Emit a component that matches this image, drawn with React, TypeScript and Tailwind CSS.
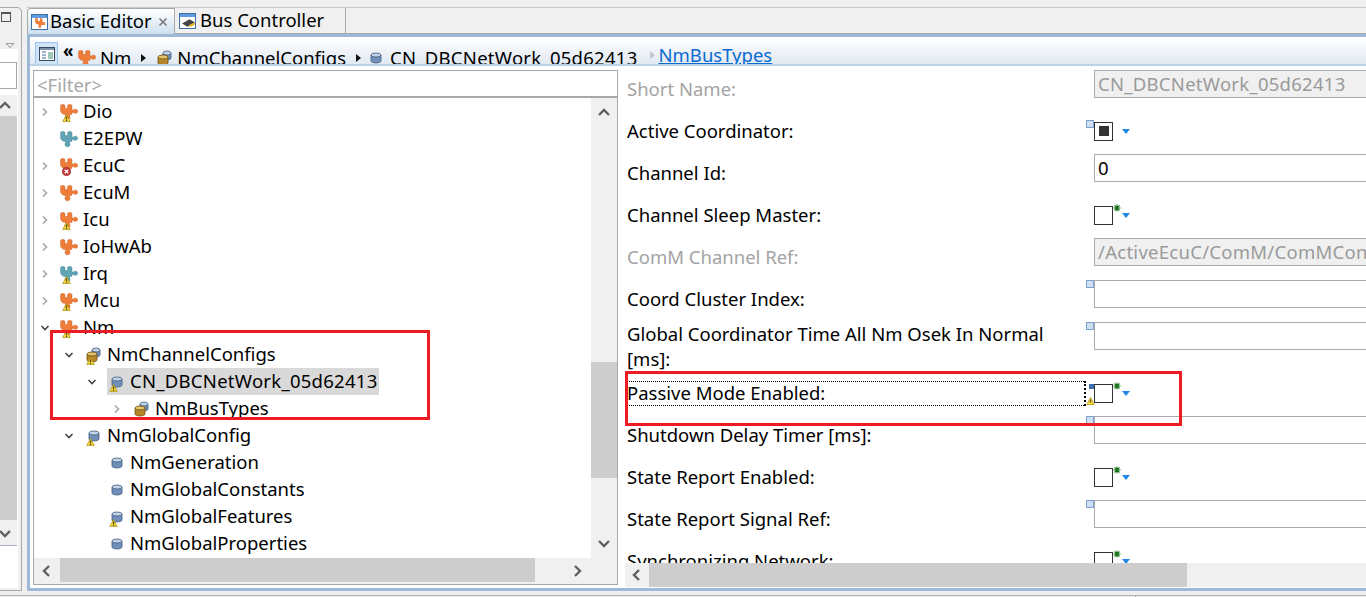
import React from "react";

type Badge = "warn" | "err" | undefined;
type Kind = "puzzle" | "puzzleBlue" | "gold" | "db";

function WarnBadge() {
  return (
    <svg viewBox="0 0 8 8" className="absolute left-[2px] bottom-[-1px] w-[9px] h-[8px]">
      <path d="M4 0.4 L7.8 7.6 H0.2 Z" fill="#f7dc3a" stroke="#a88a10" strokeWidth="0.7" />
      <rect x="3.4" y="2.5" width="1.3" height="3" fill="#5a4a10" />
      <rect x="3.4" y="6" width="1.3" height="1" fill="#5a4a10" />
    </svg>
  );
}

function ErrBadge() {
  return (
    <svg viewBox="0 0 8 8" className="absolute left-[2px] bottom-[-1px] w-[9px] h-[9px]">
      <circle cx="4" cy="4" r="3.6" fill="#c8383c" stroke="#8c2226" strokeWidth="0.6" />
      <path d="M2.4 2.4 L5.6 5.6 M5.6 2.4 L2.4 5.6" stroke="#fff" strokeWidth="1.1" />
    </svg>
  );
}

function Puzzle({ color, dark }: { color: string; dark: string }) {
  return (
    <svg viewBox="0 0 18 18" className="absolute inset-0 w-[18px] h-[18px]">
      <path
        d="M0.5 2.5 C0.5 1 5 1 5 2.5 V5.5 H7.5 V2.5 C7.5 1 12 1 12 2.5 V7 H13.5 C14 5.6 17.8 5.8 17.8 8.2 C17.8 10.6 14 10.8 13.5 9.4 H12 V11.5 H9.5 V13 C10.5 13.5 10.5 16.8 7.5 16.8 C4.6 16.8 4.6 13.5 5.5 13 V11.5 C2.5 11.5 0.5 9.8 0.5 7.5 Z"
        fill={color}
        stroke={dark}
        strokeWidth="0.4"
      />
    </svg>
  );
}

function Cyl({ x, y, w, h, body, top, edge }: { x: number; y: number; w: number; h: number; body: string; top: string; edge: string }) {
  return (
    <g>
      <path d={`M${x} ${y + 2} V${y + h - 2} C${x} ${y + h + 0.6} ${x + w} ${y + h + 0.6} ${x + w} ${y + h - 2} V${y + 2} Z`} fill={body} stroke={edge} strokeWidth="0.8" />
      <ellipse cx={x + w / 2} cy={y + 2} rx={w / 2} ry="2" fill={top} stroke={edge} strokeWidth="0.8" />
    </g>
  );
}

function NodeIcon({ kind, badge }: { kind: Kind; badge?: Badge }) {
  return (
    <span className="relative block w-[18px] h-[18px] shrink-0">
      {kind === "puzzle" && <Puzzle color="#ee7d3a" dark="#c85a20" />}
      {kind === "puzzleBlue" && <Puzzle color="#5fa3b5" dark="#3f8090" />}
      {kind === "db" && (
        <svg viewBox="0 0 18 18" className="absolute inset-0 w-[18px] h-[18px]">
          <Cyl x={5} y={4} w={10} h={10} body="#6f8fb8" top="#c3d3e6" edge="#3f5a80" />
        </svg>
      )}
      {kind === "gold" && (
        <svg viewBox="0 0 18 18" className="absolute inset-0 w-[18px] h-[18px]">
          <Cyl x={8} y={2} w={8} h={9} body="#6f8fb8" top="#c3d3e6" edge="#3f5a80" />
          <Cyl x={3} y={6} w={10} h={10} body="#b8862a" top="#e6c46a" edge="#6e4e10" />
        </svg>
      )}
      {badge === "warn" && <WarnBadge />}
      {badge === "err" && <ErrBadge />}
    </span>
  );
}

function TreeArrow({ open }: { open?: boolean }) {
  if (open) {
    return (
      <svg viewBox="0 0 10 10" className="w-[10px] h-[10px]">
        <path d="M1.5 3 L5 6.5 L8.5 3" fill="none" stroke="#444444" strokeWidth="1.6" />
      </svg>
    );
  }
  return (
    <svg viewBox="0 0 10 10" className="w-[10px] h-[10px]">
      <path d="M3 1.5 L6.5 5 L3 8.5" fill="none" stroke="#a6a6a6" strokeWidth="1.6" />
    </svg>
  );
}

type Row = { label: string; level: number; arrow?: "open" | "closed"; kind: Kind; badge?: Badge; selected?: boolean };

const rows: Row[] = [
  { label: "Dio", level: 0, arrow: "closed", kind: "puzzle", badge: "warn" },
  { label: "E2EPW", level: 0, kind: "puzzleBlue" },
  { label: "EcuC", level: 0, arrow: "closed", kind: "puzzle", badge: "err" },
  { label: "EcuM", level: 0, arrow: "closed", kind: "puzzle" },
  { label: "Icu", level: 0, arrow: "closed", kind: "puzzle", badge: "warn" },
  { label: "IoHwAb", level: 0, arrow: "closed", kind: "puzzle" },
  { label: "Irq", level: 0, arrow: "closed", kind: "puzzleBlue", badge: "warn" },
  { label: "Mcu", level: 0, arrow: "closed", kind: "puzzle", badge: "warn" },
  { label: "Nm", level: 0, arrow: "open", kind: "puzzle", badge: "warn" },
  { label: "NmChannelConfigs", level: 1, arrow: "open", kind: "gold", badge: "warn" },
  { label: "CN_DBCNetWork_05d62413", level: 2, arrow: "open", kind: "db", badge: "warn", selected: true },
  { label: "NmBusTypes", level: 3, arrow: "closed", kind: "gold" },
  { label: "NmGlobalConfig", level: 1, arrow: "open", kind: "db", badge: "warn" },
  { label: "NmGeneration", level: 2, kind: "db" },
  { label: "NmGlobalConstants", level: 2, kind: "db" },
  { label: "NmGlobalFeatures", level: 2, kind: "db", badge: "warn" },
  { label: "NmGlobalProperties", level: 2, kind: "db" },
];

const indentClass = ["pl-[6px]", "pl-[30px]", "pl-[53px]", "pl-[78px]"];

function TreeRow({ r }: { r: Row }) {
  return (
    <div className={`flex items-center h-[27px] ${indentClass[r.level]}`}>
      <span className="w-[10px] flex justify-center shrink-0">
        {r.arrow && <TreeArrow open={r.arrow === "open"} />}
      </span>
      <span className="ml-[10px] shrink-0">
        <NodeIcon kind={r.kind} badge={r.badge} />
      </span>
      {r.selected ? (
        <span className="ml-[-18px] pl-[23px] pb-[2px] bg-[#d9d9d9] h-[27px] flex items-center whitespace-nowrap pr-[1px] tracking-[0.27px]">{r.label}</span>
      ) : (
        <span className="ml-[5px] pb-[2px] whitespace-nowrap">{r.label}</span>
      )}
    </div>
  );
}

function ScrollChevron({ dir }: { dir: "up" | "down" | "left" | "right" }) {
  const d = {
    up: "M2 9 L7 4 L12 9",
    down: "M2 5 L7 10 L12 5",
    left: "M9 2 L4 7 L9 12",
    right: "M5 2 L10 7 L5 12",
  }[dir];
  return (
    <svg viewBox="0 0 14 14" className="w-[14px] h-[14px] shrink-0">
      <path d={d} fill="none" stroke="#606060" strokeWidth="2.4" />
    </svg>
  );
}

function Deco({ raised }: { raised?: boolean }) {
  return (
    <svg viewBox="0 0 8 8" className={`absolute left-[-9px] w-[8px] h-[8px] ${raised ? "top-[-3px]" : "top-[-1px]"}`}>
      <rect x="0.5" y="0.5" width="7" height="7" fill="#cfe0f5" stroke="#0f4f9f" strokeWidth="1" strokeDasharray="1 1" />
    </svg>
  );
}

function Star() {
  return (
    <svg viewBox="0 0 8 8" className="absolute left-[18px] top-[-3px] w-[8px] h-[8px]">
      <path d="M4 0.5 V7.5 M0.5 4 H7.5 M1.5 1.5 L6.5 6.5 M6.5 1.5 L1.5 6.5" stroke="#167016" strokeWidth="1.1" />
    </svg>
  );
}

function Drop() {
  return (
    <svg viewBox="0 0 8 5" className="block w-[8px] h-[5px] ml-[9px] mt-[1px]">
      <path d="M0 0 H8 L4 5 Z" fill="#1e88e5" />
    </svg>
  );
}

function Check({ checked, star, deco, passive }: { checked?: boolean; star?: boolean; deco?: boolean; passive?: boolean }) {
  return (
    <div className="flex items-center">
      <div className="relative w-[19px] h-[19px] border-[1.5px] border-[#333333] bg-white flex items-center justify-center">
        {checked && <div className="w-[10px] h-[10px] bg-[#333333]" />}
        {star && <Star />}
        {deco && <Deco raised />}
        {passive && (
          <>
            <div className="absolute left-[-6px] top-[-1px] w-[5px] h-[5px] bg-[#3f6fb0]" />
            <div className="absolute left-[-9px] top-[12px]">
              <svg viewBox="0 0 8 8" className="block w-[9px] h-[8px]">
                <path d="M4 0.4 L7.8 7.6 H0.2 Z" fill="#f7dc3a" stroke="#a88a10" strokeWidth="0.7" />
                <rect x="3.4" y="2.5" width="1.3" height="3" fill="#7a5a10" />
              </svg>
            </div>
          </>
        )}
      </div>
      <Drop />
    </div>
  );
}

function Field({ value, disabled, deco, spaced }: { value?: string; disabled?: boolean; deco?: boolean; spaced?: boolean }) {
  return (
    <div
      className={`relative self-start mt-[2px] h-[28px] w-[290px] border-[1.5px] border-r-0 border-[#ababab] flex items-center pl-[3px] whitespace-nowrap overflow-visible ${
        disabled ? "bg-[#f0f0f0] text-[#9a9a9a]" : "bg-white text-black"
      } ${spaced ? "tracking-[0.27px]" : ""}`}
    >
      {value}
      {deco && <Deco />}
    </div>
  );
}

function FormRow({ label, muted, tall, focus, children }: { label: React.ReactNode; muted?: boolean; tall?: boolean; focus?: boolean; children: React.ReactNode }) {
  return (
    <div className={`flex items-center ${tall ? "h-[52px]" : "h-[42px]"}`}>
      <div className={`w-[469px] shrink-0 pl-[9px] ${muted ? "text-[#a3a3a3]" : "text-black"}`}>
        {focus ? (
          <div className="w-[460px] h-[25px] border border-dotted border-black border-r-2 ml-[-1px] flex items-center">{label}</div>
        ) : (
          <div className={`w-[430px] leading-[25px] ${tall ? "" : "pb-[2px]"}`}>{label}</div>
        )}
      </div>
      <div className="w-[7px] shrink-0" />
      {children}
    </div>
  );
}

function Tri({ color = "#111111", className }: { color?: string; className: string }) {
  return (
    <svg viewBox="0 0 5 8" className={`w-[5px] h-[8px] shrink-0 ${className}`}>
      <path d="M0 0 L5 4 L0 8 Z" fill={color} />
    </svg>
  );
}

function EditorTabIcon({ bus }: { bus?: boolean }) {
  return (
    <span className="relative block w-[17px] h-[16px] shrink-0 border border-[#3f6fa8] bg-white">
      <span className="block h-[3px] bg-[#5f9be0]" />
      {bus ? (
        <svg viewBox="0 0 14 10" className="absolute left-[1px] bottom-[0px] w-[15px] h-[11px]">
          <path d="M1 6 L8 2 L13 5 L6 9 Z" fill="#444444" />
          <path d="M8 7 L13 5 V7 L8 9.5 Z" fill="#e8b820" />
        </svg>
      ) : (
        <svg viewBox="0 0 18 18" className="absolute left-[2px] bottom-[0px] w-[13px] h-[12px]">
          <path d="M1 2 H5 V6 H8 V2 H12 V8 H16 V12 H10 V16 H6 V11 C3 11 1 9 1 7 Z" fill="#ee7d3a" />
        </svg>
      )}
    </span>
  );
}

export default function App() {
  return (
    <div className="relative w-[1366px] h-[597px] overflow-hidden bg-[#f0f0f0] text-[18.5px] text-black font-['Noto_Sans','Open_Sans',sans-serif] flex flex-col">
      <div className="h-[591px] flex shrink-0">
        {/* left view sliver */}
        <div className="w-[22px] shrink-0 mt-[7px] mb-[0px] border-t border-r border-b border-[#a8a8a8] rounded-tr-[5px] flex flex-col">
          <div className="h-[41px] shrink-0 flex flex-col">
            <div className="w-[10px] h-[10px] mt-[4px] ml-[1px] border border-[#555555] border-t-2" />
            <svg viewBox="0 0 10 6" className="w-[10px] h-[5px] mt-[21px] ml-[5px]">
              <path d="M0.5 0.5 H9.5 L5 5.5 Z" fill="none" stroke="#808080" />
            </svg>
          </div>
          <div className="flex-1 min-h-0 bg-white mr-[3px] mb-[2px] flex flex-col">
            <div className="h-[13px] shrink-0" />
            <div className="h-[27px] w-[17px] shrink-0 border border-l-0 border-[#a8a8a8]" />
            <div className="h-[6px] shrink-0" />
            <div className="h-[451px] w-[17px] shrink-0 flex flex-col bg-[#f0f0f0] border-b border-[#a8b0c0]">
              <div className="h-[21px] w-[10px] flex items-center justify-center shrink-0">
                <ScrollChevron dir="up" />
              </div>
              <div className="h-[404px] bg-[#cdcdcd] shrink-0" />
              <div className="flex-1 w-[10px] flex items-center justify-center">
                <ScrollChevron dir="down" />
              </div>
            </div>
          </div>
        </div>
        <div className="w-[5px] shrink-0" />

        {/* editor */}
        <div className="flex-1 min-w-0 flex flex-col mt-[7px]">
          <div className="h-[27px] flex border-t border-[#c8c8c8] shrink-0">
            <div className="w-[148px] flex items-center pl-[3px] bg-gradient-to-b from-white to-[#cfe0f0] border border-b-0 border-[#a8a8a8] rounded-tl-[4px]">
              <EditorTabIcon />
              <span className="ml-[2px] pb-[2px] whitespace-nowrap">Basic Editor</span>
              <svg viewBox="0 0 10 10" className="w-[10px] h-[10px] ml-auto mr-[6px]">
                <path d="M1.5 1.5 L8.5 8.5 M8.5 1.5 L1.5 8.5" stroke="#777777" strokeWidth="1.6" />
              </svg>
            </div>
            <div className="w-[171px] flex items-center pl-[4px] border-r border-b border-[#a8a8a8]">
              <EditorTabIcon bus />
              <span className="ml-[4px] pb-[2px] whitespace-nowrap">Bus Controller</span>
            </div>
            <div className="flex-1 border-b border-[#a8a8a8]" />
          </div>
          <div className="flex-1 min-h-0 border-[3px] border-r-0 border-[#9db9d6] bg-white flex flex-col">
            {/* breadcrumb */}
            <div className="h-[29px] shrink-0 overflow-hidden bg-gradient-to-b from-white to-[#e1e9f2] border-b-2 border-[#bcd2e8] flex items-start pl-[5px] pt-[5px]">
              <div className="w-[23px] h-[23px] bg-[#cfe4f8] border border-[#9cc4ea] flex items-center justify-center shrink-0">
                <svg viewBox="0 0 16 14" className="w-[16px] h-[14px]">
                  <rect x="0.5" y="0.5" width="15" height="13" fill="#fff" stroke="#3a4a5a" />
                  <rect x="1" y="1" width="14" height="2" fill="#7a8fa5" />
                  <path d="M3 5 H7 M3 8 H7 M3 11 H7" stroke="#3a6a9a" />
                  <rect x="9" y="5" width="5" height="7" fill="#9fc8b8" />
                </svg>
              </div>
              <span className="ml-[5px] w-[15px] shrink-0 mt-[-1px] text-[17px] font-bold leading-[20px]">«</span>
              <div className="mt-[3px] flex items-center leading-[26px] whitespace-nowrap">
                <span className="mr-[4px]">
                  <NodeIcon kind="puzzle" />
                </span>
                <span>Nm</span>
                <Tri className="ml-[10px] mr-[9px]" />
                <span className="mr-[4px]">
                  <NodeIcon kind="gold" />
                </span>
                <span>NmChannelConfigs</span>
                <Tri className="ml-[10px] mr-[5px]" />
                <span className="mr-[6px]">
                  <NodeIcon kind="db" />
                </span>
                <span className="tracking-[0.27px]">CN_DBCNetWork_05d62413</span>
              </div>
              <div className="flex items-center ml-[12px]">
                <Tri color="#c0c8d0" className="mr-[4px]" />
                <span className="underline text-[#0a6ad0] leading-[24px] mt-[1px] whitespace-nowrap">NmBusTypes</span>
              </div>
            </div>

            <div className="flex-1 min-h-0 flex pt-[4px]">
              {/* tree panel */}
              <div className="w-[585px] shrink-0 ml-[3px] h-[515px] border border-[#a8a8a8] flex flex-col">
                <div className="h-[27px] shrink-0 border-b-2 border-[#a8a8a8] flex items-center pl-[3px] pt-[2px] text-[#a8a8a8]">&lt;Filter&gt;</div>
                <div className="flex-1 min-h-0 flex">
                  <div className="w-[557px] shrink-0 flex flex-col min-h-0">
                    <div className="h-[460px] shrink-0 overflow-hidden">
                      {rows.map((r) => (
                        <TreeRow key={r.label} r={r} />
                      ))}
                    </div>
                    <div className="flex-1 flex bg-[#f0f0f0]">
                      <div className="w-[26px] flex items-center justify-center">
                        <ScrollChevron dir="left" />
                      </div>
                      <div className="w-[475px] bg-[#cdcdcd] mb-[2px]" />
                      <div className="flex-1 flex items-center justify-center pl-[27px]">
                        <ScrollChevron dir="right" />
                      </div>
                    </div>
                  </div>
                  <div className="flex-1 bg-[#f0f0f0] flex flex-col items-center">
                    <div className="h-[264px] w-full flex flex-col items-center pt-[8px]">
                      <ScrollChevron dir="up" />
                    </div>
                    <div className="h-[116px] w-full bg-[#cdcdcd] shrink-0" />
                    <div className="flex-1 w-full flex items-start justify-center pt-[58px]">
                      <ScrollChevron dir="down" />
                    </div>
                  </div>
                </div>
              </div>

              {/* form panel */}
              <div className="flex-1 min-w-0 flex flex-col overflow-hidden mt-[-2px]">
                <div className="h-[495px] shrink-0 overflow-hidden">
                  <FormRow label="Short Name:" muted>
                    <Field value="CN_DBCNetWork_05d62413" disabled spaced />
                  </FormRow>
                  <FormRow label="Active Coordinator:">
                    <Check checked deco />
                  </FormRow>
                  <FormRow label="Channel Id:">
                    <Field value="0" />
                  </FormRow>
                  <FormRow label="Channel Sleep Master:">
                    <Check star />
                  </FormRow>
                  <FormRow label="ComM Channel Ref:" muted>
                    <Field value="/ActiveEcuC/ComM/ComMConfigSet" disabled spaced />
                  </FormRow>
                  <FormRow label="Coord Cluster Index:">
                    <Field deco />
                  </FormRow>
                  <FormRow label="Global Coordinator Time All Nm Osek In Normal [ms]:" tall>
                    <Field deco />
                  </FormRow>
                  <FormRow label="Passive Mode Enabled:" focus>
                    <Check star passive />
                  </FormRow>
                  <FormRow label="Shutdown Delay Timer [ms]:">
                    <Field deco />
                  </FormRow>
                  <FormRow label="State Report Enabled:">
                    <Check star />
                  </FormRow>
                  <FormRow label="State Report Signal Ref:">
                    <Field deco />
                  </FormRow>
                  <FormRow label="Synchronizing Network:">
                    <Check star />
                  </FormRow>
                </div>
                <div className="h-[24px] ml-[7px] flex bg-[#f0f0f0] shrink-0">
                  <div className="w-[24px] flex items-center justify-center">
                    <ScrollChevron dir="left" />
                  </div>
                  <div className="w-[538px] bg-[#cdcdcd]" />
                </div>
              </div>
            </div>
          </div>
        </div>
      </div>
      <div className="flex-1 flex justify-end mt-[4px] border-t border-[#b0b0b0]">
        <div className="w-[67px] border-l border-[#b0b0b0] mr-[164px]" />
      </div>

      {/* red highlight boxes */}
      <div className="absolute left-[50px] top-[330px] w-[380px] h-[90px] border-[3px] border-[#ed1c24] pointer-events-none" />
      <div className="absolute left-[625px] top-[371px] w-[557px] h-[55px] border-[3px] border-[#ed1c24] pointer-events-none" />
    </div>
  );
}
